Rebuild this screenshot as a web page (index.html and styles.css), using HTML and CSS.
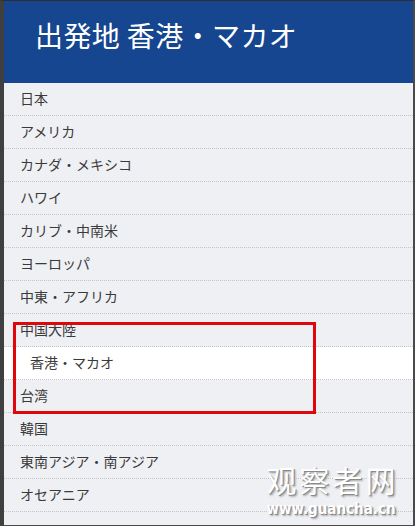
FILE: index.html
```html
<!DOCTYPE html>
<html lang="ja">
<head>
<meta charset="utf-8">
<link rel="stylesheet" href="styles.css">
</head>
<body>
<div class="frame">
  <header class="head">
    <h1 class="title">出発地 香港・マカオ</h1>
  </header>
  <ul class="list">
    <li class="row">日本</li>
    <li class="row">アメリカ</li>
    <li class="row">カナダ・メキシコ</li>
    <li class="row">ハワイ</li>
    <li class="row">カリブ・中南米</li>
    <li class="row">ヨーロッパ</li>
    <li class="row">中東・アフリカ</li>
    <li class="row">中国大陸</li>
    <li class="row row-active">香港・マカオ</li>
    <li class="row">台湾</li>
    <li class="row">韓国</li>
    <li class="row">東南アジア・南アジア</li>
    <li class="row">オセアニア</li>
  </ul>
  <div class="highlight"></div>
  <div class="watermark">
    <div class="wm-cn">观察者网</div>
    <div class="wm-url">www.guancha.cn</div>
  </div>
</div>
</body>
</html>
```

FILE: styles.css
```css
* { box-sizing: border-box; }
html, body {
  margin: 0;
  padding: 0;
  background: #3c3c3c;
}
.frame {
  position: relative;
  width: 415px;
  height: 526px;
  overflow: hidden;
  background: #eff0f4;
  border-left: 4px solid #3f3f3f;
  border-right: 2px solid #4a4a4a;
  border-top: 1px solid #2e2e2e;
  border-bottom: 1px solid #4a4a4a;
  font-family: "Noto Sans CJK JP", "Noto Sans", sans-serif;
}
.head {
  height: 82px;
  background: #15468f;
  padding: 17px 0 0 31px;
}
.title {
  margin: 0;
  color: #ffffff;
  font-size: 28px;
  font-weight: 400;
  line-height: 34px;
  letter-spacing: 0.4px;
}
.list {
  list-style: none;
  margin: 0;
  padding: 0;
}
.row {
  height: 33px;
  line-height: 31px;
  padding-left: 16px;
  font-size: 14px;
  color: #3a3a3a;
  border-bottom: 1px dotted #c4c5c8;
}
.row-active {
  background: #ffffff;
  padding-left: 26px;
}
.highlight {
  position: absolute;
  left: 9px;
  top: 321px;
  width: 303px;
  height: 92px;
  border: 3px solid #e0070b;
}
.watermark {
  position: absolute;
  left: 257px;
  top: 463px;
  width: 140px;
  color: #ffffff;
  text-align: center;
}
.wm-cn {
  font-family: "Noto Sans CJK SC", sans-serif;
  font-size: 30px;
  line-height: 30px;
  font-weight: 400;
  letter-spacing: 3px;
  text-indent: 3px;
  text-shadow: 1px 1px 0 #8a8a8a, 2px 2px 2px #a8a8a8;
}
.wm-url {
  margin-top: 7px;
  font-family: "DejaVu Sans Condensed", "Liberation Sans", sans-serif;
  font-weight: 700;
  font-size: 15px;
  line-height: 17px;
  text-shadow: 1px 1px 0 #8a8a8a, 2px 2px 2px #a8a8a8;
}
```
